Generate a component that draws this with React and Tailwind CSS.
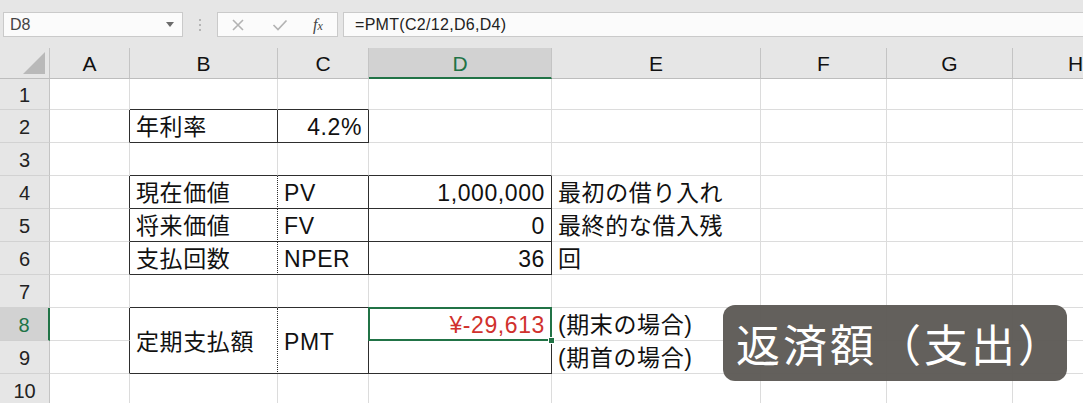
import React from "react";

const FONT = { fontFamily: '"Liberation Sans", "Noto Sans CJK JP", sans-serif' };

const COLS = ["A", "B", "C", "D", "E", "F", "G", "H"];

// bordures du tableau
const DR = "border-r-[#2e2e2e]";
const DB = "border-b-[#2e2e2e]";
const DOT = "border-r-[#2e2e2e] [border-right-style:dotted]";

function Cell({ children, className = "" }) {
  return (
    <div
      className={`flex items-center border-r border-b border-[#dcdcdc] bg-white px-[6px] pt-[3px] text-[23px] tracking-[0.6px] text-[#111] whitespace-nowrap overflow-visible ${className}`}
    >
      {children}
    </div>
  );
}

function RowHead({ n, active }) {
  return (
    <div
      className={
        active
          ? "flex items-center justify-center border-b border-b-[#cfcfcf] border-r-2 border-r-[#217346] bg-[#d2d2d2] pt-[2px] text-[20px] text-[#217346]"
          : "flex items-center justify-center border-b border-r border-b-[#d2d2d2] border-r-[#c4c4c4] bg-[#e6e6e6] pt-[2px] text-[20px] text-[#222]"
      }
    >
      {n}
    </div>
  );
}

function Toolbar() {
  return (
    <div className="flex h-[48px] items-start bg-[#e6e6e6] pt-[12px]">
      <div className="ml-[3px] flex h-[25px] w-[180px] items-center justify-between border border-[#cacaca] bg-[#fbfbfb] pl-[6px] pr-[8px]">
        <span className="text-[16px] text-[#444]">D8</span>
        <svg width="8" height="5" viewBox="0 0 8 5">
          <path d="M0 0 L8 0 L4 5 Z" fill="#6b6b6b" />
        </svg>
      </div>
      <div className="flex h-[25px] w-[34px] flex-col items-center justify-center gap-[3px]">
        <span className="h-[2px] w-[2px] bg-[#b5b5b5]" />
        <span className="h-[2px] w-[2px] bg-[#b5b5b5]" />
        <span className="h-[2px] w-[2px] bg-[#b5b5b5]" />
      </div>
      <div className="flex h-[25px] w-[121px] items-center border border-[#cacaca] bg-[#fbfbfb] pl-[13px]">
        <svg width="14" height="14" viewBox="0 0 14 14">
          <path d="M2 2 L12 12 M12 2 L2 12" stroke="#b3b3b3" strokeWidth="1.6" />
        </svg>
        <svg width="16" height="14" viewBox="0 0 16 14" className="ml-[27px]">
          <path d="M1.5 7 L6 11.5 L14.5 2.5" stroke="#b3b3b3" strokeWidth="1.7" fill="none" />
        </svg>
        <span
          className="ml-[25px] text-[16px] italic text-[#444]"
          style={{ fontFamily: '"Liberation Serif", serif' }}
        >
          f<span className="text-[12px]">x</span>
        </span>
      </div>
      <div className="ml-[5px] flex h-[25px] flex-1 items-center border border-r-0 border-[#cacaca] bg-[#fbfbfb] pl-[11px]">
        <span className="text-[16px] tracking-[0.3px] text-[#222]">=PMT(C2/12,D6,D4)</span>
      </div>
    </div>
  );
}

function Sheet() {
  const rows = [];

  // ligne 1
  rows.push(
    <RowHead key="h1" n={1} />,
    <Cell key="a1" />,
    <Cell key="b1" className={DB} />,
    <Cell key="c1" className={DB} />,
    <Cell key="d1" />,
    <Cell key="e1" />,
    <Cell key="f1" />,
    <Cell key="g1" />,
    <Cell key="x1" />
  );

  // ligne 2
  rows.push(
    <RowHead key="h2" n={2} />,
    <Cell key="a2" className={DR} />,
    <Cell key="b2" className={`${DR} ${DB}`}>年利率</Cell>,
    <Cell key="c2" className={`${DR} ${DB} justify-end`}>4.2%</Cell>,
    <Cell key="d2" />,
    <Cell key="e2" />,
    <Cell key="f2" />,
    <Cell key="g2" />,
    <Cell key="x2" />
  );

  // ligne 3
  rows.push(
    <RowHead key="h3" n={3} />,
    <Cell key="a3" />,
    <Cell key="b3" className={DB} />,
    <Cell key="c3" className={DB} />,
    <Cell key="d3" className={DB} />,
    <Cell key="e3" />,
    <Cell key="f3" />,
    <Cell key="g3" />,
    <Cell key="x3" />
  );

  const table = [
    [4, "現在価値", "PV", "1,000,000", "最初の借り入れ"],
    [5, "将来価値", "FV", "0", "最終的な借入残"],
    [6, "支払回数", "NPER", "36", "回"],
  ];
  table.forEach(([n, b, c, d, e]) => {
    rows.push(
      <RowHead key={`h${n}`} n={n} />,
      <Cell key={`a${n}`} className={DR} />,
      <Cell key={`b${n}`} className={`${DOT} ${DB}`}>{b}</Cell>,
      <Cell key={`c${n}`} className={`${DR} ${DB}`}>{c}</Cell>,
      <Cell key={`d${n}`} className={`${DR} ${DB} justify-end`}>{d}</Cell>,
      <Cell key={`e${n}`}>{e}</Cell>,
      <Cell key={`f${n}`} />,
      <Cell key={`g${n}`} />,
      <Cell key={`x${n}`} />
    );
  });

  // ligne 7
  rows.push(
    <RowHead key="h7" n={7} />,
    <Cell key="a7" />,
    <Cell key="b7" className={DB} />,
    <Cell key="c7" className={DB} />,
    <Cell key="d7" className={DB} />,
    <Cell key="e7" />,
    <Cell key="f7" />,
    <Cell key="g7" />,
    <Cell key="x7" />
  );

  // lignes 8-9 (cellules fusionnées)
  rows.push(
    <RowHead key="h8" n={8} active />,
    <Cell key="a8" className={DR} />,
    <Cell key="b8" className={`row-span-2 ${DOT} ${DB}`}>定期支払額</Cell>,
    <Cell key="c8" className={`row-span-2 ${DR} ${DB}`}>PMT</Cell>,
    <Cell key="d8" className={`relative justify-end ${DR} text-[#d0312d]`}>
      ¥-29,613
      <div className="absolute -top-[1px] -left-[1px] -right-[1px] -bottom-[1px] border-2 border-[#217346]" />
      <div className="absolute -right-[4px] -bottom-[4px] h-[7px] w-[7px] border border-white bg-[#217346]" />
    </Cell>,
    <Cell key="e8" className="px-[3px]">(期末の場合)</Cell>,
    <Cell key="f8" />,
    <Cell key="g8" />,
    <Cell key="x8" />
  );
  rows.push(
    <RowHead key="h9" n={9} />,
    <Cell key="a9" className={DR} />,
    <Cell key="d9" className={`${DR} ${DB}`} />,
    <Cell key="e9" className="px-[3px]">(期首の場合)</Cell>,
    <Cell key="f9" />,
    <Cell key="g9" />,
    <Cell key="x9" />
  );

  // ligne 10
  rows.push(
    <RowHead key="h10" n={10} />,
    ...[1, 2, 3, 4, 5, 6, 7, 8].map((i) => <Cell key={`r10${i}`} />)
  );

  return (
    <div className="grid grid-cols-[50px_80px_148px_91px_183px_209px_126px_126px_126px] grid-rows-[31px_31px_33px_33px_33px_33px_33px_33px_33px_33px_33px]">
      <div className="relative border-r border-b border-r-[#c4c4c4] border-b-[#bdbdbd] bg-[#e6e6e6]">
        <svg width="22" height="22" viewBox="0 0 22 22" className="absolute right-[4px] bottom-[4px]">
          <path d="M22 0 L22 22 L0 22 Z" fill="#b9b9b9" />
        </svg>
      </div>
      {COLS.map((c) =>
        c === "D" ? (
          <div
            key={c}
            className="flex items-center justify-center border-r border-r-[#c4c4c4] border-b-2 border-b-[#217346] bg-[#d2d2d2] pt-[2px] text-[21px] text-[#217346]"
          >
            {c}
          </div>
        ) : (
          <div
            key={c}
            className="flex items-center justify-center border-r border-b border-r-[#c4c4c4] border-b-[#bdbdbd] bg-[#e6e6e6] pt-[2px] text-[21px] text-[#111]"
          >
            {c}
          </div>
        )
      )}
      {rows}
    </div>
  );
}

export default function App() {
  return (
    <div className="relative h-[403px] w-[1083px] overflow-hidden bg-white" style={FONT}>
      <Toolbar />
      <Sheet />
      <div className="absolute left-[723px] top-[305px] flex h-[76px] w-[344px] items-center rounded-[12px] bg-[#5b5753]/95 pl-[13px]">
        <span
          className="text-[44px] leading-none tracking-[3px] text-white"
          style={{ fontFamily: '"Noto Sans CJK JP", sans-serif' }}
        >
          返済額（支出）
        </span>
      </div>
    </div>
  );
}
